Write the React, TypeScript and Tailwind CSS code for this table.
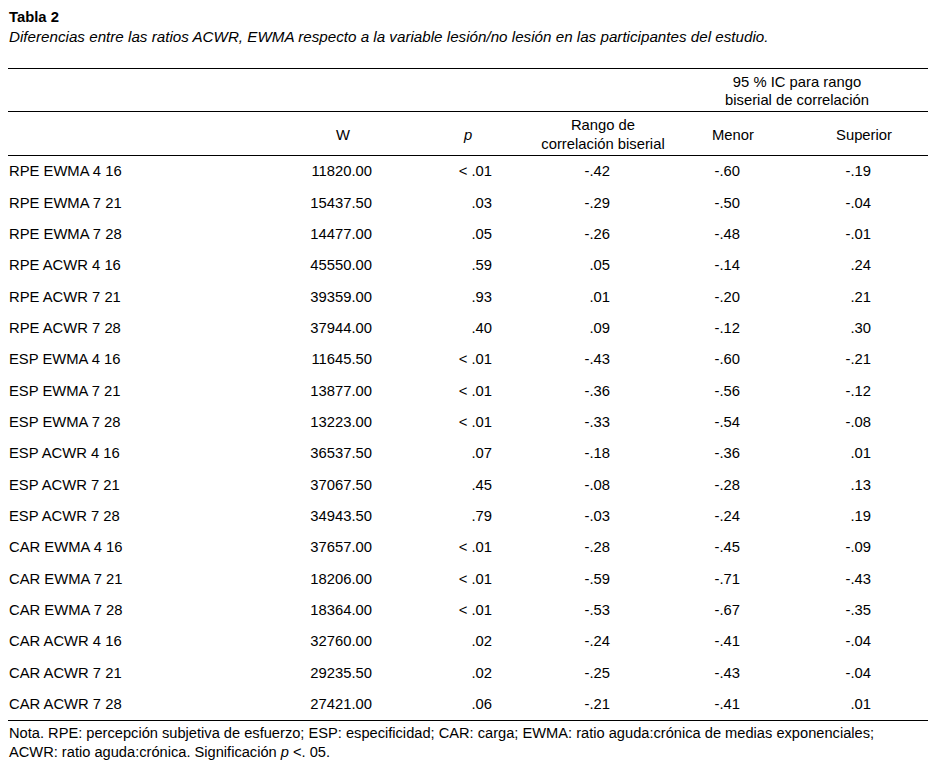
const rows: [string, string, string, string, string, string][] = [
  ['RPE EWMA 4 16', '11820.00', '< .01', '-.42', '-.60', '-.19'],
  ['RPE EWMA 7 21', '15437.50', '.03', '-.29', '-.50', '-.04'],
  ['RPE EWMA 7 28', '14477.00', '.05', '-.26', '-.48', '-.01'],
  ['RPE ACWR 4 16', '45550.00', '.59', '.05', '-.14', '.24'],
  ['RPE ACWR 7 21', '39359.00', '.93', '.01', '-.20', '.21'],
  ['RPE ACWR 7 28', '37944.00', '.40', '.09', '-.12', '.30'],
  ['ESP EWMA 4 16', '11645.50', '< .01', '-.43', '-.60', '-.21'],
  ['ESP EWMA 7 21', '13877.00', '< .01', '-.36', '-.56', '-.12'],
  ['ESP EWMA 7 28', '13223.00', '< .01', '-.33', '-.54', '-.08'],
  ['ESP ACWR 4 16', '36537.50', '.07', '-.18', '-.36', '.01'],
  ['ESP ACWR 7 21', '37067.50', '.45', '-.08', '-.28', '.13'],
  ['ESP ACWR 7 28', '34943.50', '.79', '-.03', '-.24', '.19'],
  ['CAR EWMA 4 16', '37657.00', '< .01', '-.28', '-.45', '-.09'],
  ['CAR EWMA 7 21', '18206.00', '< .01', '-.59', '-.71', '-.43'],
  ['CAR EWMA 7 28', '18364.00', '< .01', '-.53', '-.67', '-.35'],
  ['CAR ACWR 4 16', '32760.00', '.02', '-.24', '-.41', '-.04'],
  ['CAR ACWR 7 21', '29235.50', '.02', '-.25', '-.43', '-.04'],
  ['CAR ACWR 7 28', '27421.00', '.06', '-.21', '-.41', '.01'],
];

export default function App() {
  return (
    <div className="w-[939px] h-[770px] bg-white pl-[8px] pt-[7px] font-['Liberation_Sans',Arial,sans-serif] text-[14.8px] text-black">
      <p className="pl-[1px] font-bold leading-[20px]">Tabla 2</p>
      <p className="pl-[1px] text-[15.2px] italic leading-[20px]">
        Diferencias entre las ratios ACWR, EWMA respecto a la variable lesión/no lesión en las participantes del estudio.
      </p>

      <div className="mt-[21px] w-[920px] border-t border-black">
        {/* header: CI group */}
        <div className="flex h-[43px] border-b border-black">
          <div className="w-[658px]" />
          <div className="w-[262px] pt-[4px] text-center leading-[18px]">
            95 % IC para rango
            <br />
            biserial de correlación
          </div>
        </div>

        {/* header: column names */}
        <div className="flex h-[44px] items-center border-b border-black pt-[3px] leading-[19px]">
          <div className="w-[282px]" />
          <div className="w-[106px] text-center">W</div>
          <div className="w-[144px] text-center italic">p</div>
          <div className="w-[126px] text-center">
            Rango de
            <br />
            correlación biserial
          </div>
          <div className="w-[134px] text-center">Menor</div>
          <div className="w-[128px] text-center">Superior</div>
        </div>

        {rows.map(r => (
          <div key={r[0]} className="flex h-[31.35px] items-center leading-[19px]">
            <div className="w-[282px] pl-[1px]">{r[0]}</div>
            <div className="w-[106px] pr-[24px] text-right">{r[1]}</div>
            <div className="w-[144px] pr-[48px] text-right">{r[2]}</div>
            <div className="w-[126px] pr-[56px] text-right">{r[3]}</div>
            <div className="w-[134px] pr-[60px] text-right">{r[4]}</div>
            <div className="w-[128px] pr-[57px] text-right">{r[5]}</div>
          </div>
        ))}
      </div>

      <div className="w-[920px] border-t border-black pl-[1px] pt-[3px] text-[14.65px] leading-[19px]">
        Nota. RPE: percepción subjetiva de esfuerzo; ESP: especificidad; CAR: carga; EWMA: ratio aguda:crónica de medias exponenciales;
        <br />
        ACWR: ratio aguda:crónica. Significación <span className="italic">p</span> &lt;. 05.
      </div>
    </div>
  );
}
